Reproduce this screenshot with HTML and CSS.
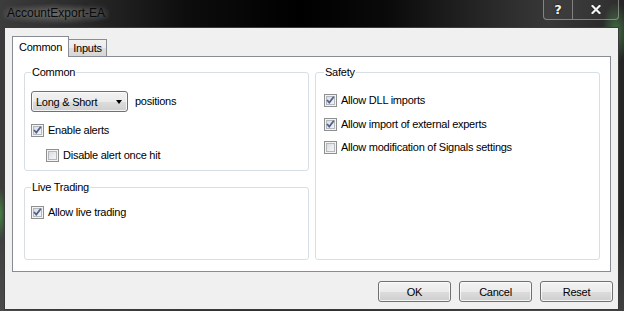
FILE: index.html
```html
<!DOCTYPE html>
<html>
<head>
<meta charset="utf-8">
<link rel="stylesheet" href="styles.css">
</head>
<body>
<div class="frame">
  <div class="titlebar">
    <span class="title">AccountExport-EA</span>
    <div class="caption-btns">
      <span class="cap help">?</span>
      <span class="cap close"><svg width="10" height="9" viewBox="0 0 10 9"><path d="M1.5 1 L8.5 8 M8.5 1 L1.5 8" stroke="#202020" stroke-width="3.6" stroke-linecap="square"/><path d="M1.5 1 L8.5 8 M8.5 1 L1.5 8" stroke="#f4f4f4" stroke-width="2.2" stroke-linecap="square"/></svg></span>
    </div>
  </div>
  <div class="client">
    <div class="tabs">
      <div class="tab active">Common</div>
      <div class="tab">Inputs</div>
    </div>
    <div class="panel">
      <div class="col">
        <fieldset class="group common">
          <legend>Common</legend>
          <div class="select-row">
            <div class="select"><span>Long &amp; Short</span><i class="arrow"></i></div>
            <span class="label">positions</span>
          </div>
          <div class="row first"><span class="cb"><svg width="11" height="11" viewBox="0 0 11 11"><path d="M2 5 L4.3 7.6 L8.8 1.8" stroke="#4f6190" stroke-width="1.8" fill="none"/></svg></span><span class="label">Enable alerts</span></div>
          <div class="row indent"><span class="cb"></span><span class="label">Disable alert once hit</span></div>
        </fieldset>
        <fieldset class="group live">
          <legend>Live Trading</legend>
          <div class="row"><span class="cb"><svg width="11" height="11" viewBox="0 0 11 11"><path d="M2 5 L4.3 7.6 L8.8 1.8" stroke="#4f6190" stroke-width="1.8" fill="none"/></svg></span><span class="label">Allow live trading</span></div>
        </fieldset>
      </div>
      <fieldset class="group safety">
        <legend>Safety</legend>
        <div class="row"><span class="cb"><svg width="11" height="11" viewBox="0 0 11 11"><path d="M2 5 L4.3 7.6 L8.8 1.8" stroke="#4f6190" stroke-width="1.8" fill="none"/></svg></span><span class="label">Allow DLL imports</span></div>
        <div class="row s2"><span class="cb"><svg width="11" height="11" viewBox="0 0 11 11"><path d="M2 5 L4.3 7.6 L8.8 1.8" stroke="#4f6190" stroke-width="1.8" fill="none"/></svg></span><span class="label">Allow import of external experts</span></div>
        <div class="row s3"><span class="cb"></span><span class="label">Allow modification of Signals settings</span></div>
      </fieldset>
    </div>
    <div class="buttons">
      <button class="btn">OK</button>
      <button class="btn">Cancel</button>
      <button class="btn">Reset</button>
    </div>
  </div>
</div>
</body>
</html>
```
FILE: styles.css
```css
html, body {
  margin: 0;
  padding: 0;
}
body {
  width: 624px;
  height: 311px;
  overflow: hidden;
  background: #1c1c1c;
  font-family: "Liberation Sans", Arial, sans-serif;
  font-size: 11px;
  letter-spacing: -0.25px;
  color: #000;
}
.frame {
  width: 624px;
  height: 311px;
  display: flex;
  flex-direction: column;
  background:
    radial-gradient(ellipse 14px 30px at 616px 32px, rgba(90, 170, 90, 0.55), rgba(90, 170, 90, 0) 100%),
    radial-gradient(ellipse 6px 26px at 0px 214px, rgba(70, 160, 70, 0.7), rgba(70, 160, 70, 0) 100%),
    linear-gradient(180deg, rgba(0,0,0,0) 70%, rgba(90,90,90,0.5) 100%),
    linear-gradient(90deg, #3c3c3c 0%, #2c2c2c 12%, #0d0d0d 30%, #000 48%, #0a0a0a 62%, #2b2b2b 80%, #383838 88%, #252525 100%);
}
.titlebar {
  height: 27px;
  flex: none;
  display: flex;
  justify-content: space-between;
  align-items: flex-start;
}
.title {
  margin-left: 3px;
  padding: 0 4px;
  line-height: 27px;
  font-size: 12px;
  letter-spacing: 0;
  color: #0a0a0a;
  background: radial-gradient(ellipse 60px 11px at 50% 52%, rgba(150,150,150,0.45), rgba(150,150,150,0) 100%);
  text-shadow: 0 0 6px rgba(200,200,200,0.5);
}
.caption-btns {
  display: flex;
  margin-right: 5px;
  height: 20px;
  box-sizing: border-box;
  border: 1px solid rgba(190, 190, 190, 0.55);
  border-top: none;
  border-radius: 0 0 4px 4px;
  background: rgba(255,255,255,0.04);
}
.cap {
  display: flex;
  align-items: center;
  justify-content: center;
  height: 19px;
  color: #f2f2f2;
  font-weight: bold;
  font-size: 13px;
  letter-spacing: 0;
  font-family: "DejaVu Sans", sans-serif;
  text-shadow: 0 0 2px #000;
}
.cap.help {
  width: 28px;
  border-right: 1px solid rgba(190, 190, 190, 0.55);
}
.cap.close {
  width: 45px;
}
.client {
  margin: 0 5px 1px 4px;
  height: 283px;
  box-sizing: border-box;
  border: 1px solid #3a3a3a;
  background: #f0f0f0;
  display: flex;
  flex-direction: column;
  padding: 8px 7px 0 7px;
}
.tabs {
  display: flex;
  align-items: flex-end;
  height: 20px;
  flex: none;
}
.tab {
  box-sizing: border-box;
  display: flex;
  align-items: center;
  justify-content: center;
  font-size: 11px;
}
.tab.active {
  width: 57px;
  height: 21px;
  margin-bottom: -1px;
  padding-bottom: 1px;
  border: 1px solid #898c95;
  border-bottom: none;
  background: #fff;
  position: relative;
  z-index: 1;
}
.tab:not(.active) {
  width: 38px;
  height: 17px;
  border-top: 1px solid #898c95;
  border-right: 1px solid #898c95;
  background: linear-gradient(180deg, #f2f2f2 0%, #ebebeb 50%, #dedede 51%, #d6d6d6 100%);
}
.panel {
  box-sizing: border-box;
  height: 216px;
  flex: none;
  border: 1px solid #898c95;
  background: #fff;
  display: flex;
  gap: 6px;
  padding: 8px 10px 11px 11px;
}
.col {
  width: 285px;
  display: flex;
  flex-direction: column;
  gap: 9px;
}
.group {
  margin: 0;
  min-width: 0;
  box-sizing: border-box;
  border: 1px solid #d5dfe5;
  border-radius: 3px;
}
.group legend {
  padding: 0 1px;
  margin-left: 0;
  line-height: 15px;
  font-size: 11px;
}
.common {
  padding: 11px 6px 8px 6px;
  flex: none;
}
.live {
  flex: 1;
  padding: 11px 6px 0 6px;
}
.safety {
  width: 285px;
  padding: 14px 8px 0 8px;
}
.select-row {
  display: flex;
  align-items: center;
  gap: 7px;
}
.select {
  width: 97px;
  height: 21px;
  box-sizing: border-box;
  border: 1px solid #707070;
  border-radius: 3px;
  background: linear-gradient(180deg, #f2f2f2 0%, #ebebeb 50%, #dddddd 51%, #cfcfcf 100%);
  box-shadow: inset 0 0 0 1px rgba(252,252,252,0.8);
  display: flex;
  align-items: center;
  padding-left: 4px;
}
.arrow {
  margin-left: auto;
  margin-right: 5px;
  width: 0;
  height: 0;
  border-left: 3.5px solid transparent;
  border-right: 3.5px solid transparent;
  border-top: 4px solid #000;
}
.row {
  display: flex;
  align-items: center;
  gap: 4px;
  height: 13px;
}
.row.first {
  margin-top: 12px;
}
.row.indent {
  margin-top: 12px;
  margin-left: 15px;
}
.row.s2 {
  margin-top: 11px;
}
.row.s3 {
  margin-top: 10px;
}
.cb {
  width: 13px;
  height: 13px;
  flex: none;
  box-sizing: border-box;
  border: 1px solid #8e8f8f;
  background: linear-gradient(135deg, #d3d6db 0%, #eceef0 60%, #f7f7f7 100%);
  box-shadow: inset 0 0 0 1px #f4f4f4, inset 0 0 0 2px #b4b8bd;
  display: flex;
  align-items: center;
  justify-content: center;
}
.label {
  line-height: 13px;
  white-space: nowrap;
}
.buttons {
  display: flex;
  justify-content: flex-end;
  gap: 8px;
  margin-top: 9px;
  margin-right: -2px;
}
.btn {
  width: 73px;
  height: 21px;
  box-sizing: border-box;
  border: 1px solid #707070;
  border-radius: 3px;
  background: linear-gradient(180deg, #f2f2f2 0%, #ebebeb 50%, #dddddd 51%, #cfcfcf 100%);
  box-shadow: inset 0 0 0 1px rgba(252,252,252,0.8);
  font-family: "Liberation Sans", Arial, sans-serif;
  font-size: 11px;
  letter-spacing: -0.25px;
  color: #000;
  padding: 0;
}
```
